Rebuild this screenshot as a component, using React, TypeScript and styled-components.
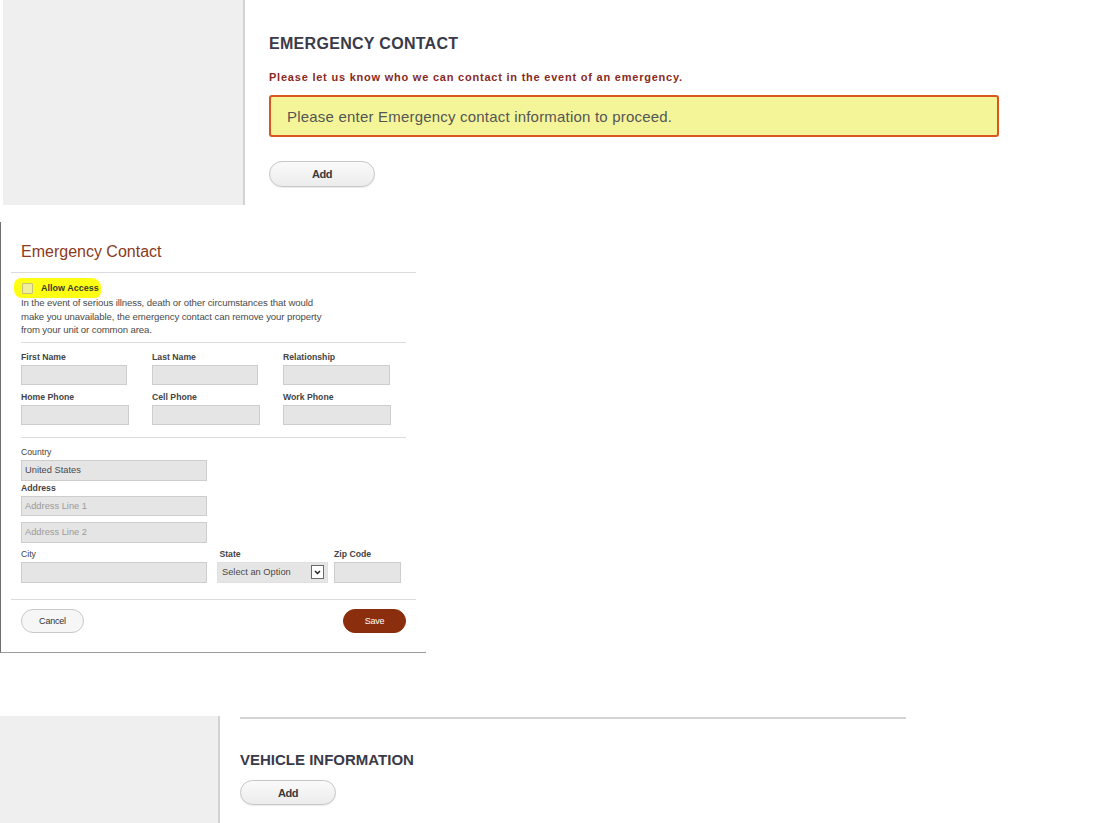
import React from 'react';
import styled, { createGlobalStyle } from 'styled-components';

const GlobalStyle = createGlobalStyle`
  body {
    margin: 0;
    background: #fff;
    font-family: "Liberation Sans", Arial, sans-serif;
    color: #333;
  }
  * { box-sizing: border-box; }
`;

const Page = styled.div`
  display: flex;
  flex-direction: column;
  width: 1104px;
  height: 823px;
  overflow: hidden;
`;

// Profile page strip (sidebar + content)
const Band = styled.section<{ $height: number; $gap?: number }>`
  display: flex;
  height: ${p => p.$height}px;
  margin-top: ${p => p.$gap || 0}px;
  flex-shrink: 0;
`;

const Sidebar = styled.aside<{ $width: number; $inset?: number }>`
  width: ${p => p.$width}px;
  margin-left: ${p => p.$inset || 0}px;
  background: #efefef;
  border-right: 2px solid #d2d2d2;
  flex-shrink: 0;
`;

const Content = styled.div<{ $pad: number }>`
  display: flex;
  flex-direction: column;
  align-items: flex-start;
  padding-left: ${p => p.$pad}px;
`;

const Rule = styled.div`
  width: 666px;
  height: 2px;
  background: #d4d4d4;
  margin-top: 1px;
`;

const SectionTitle = styled.h2<{ $size: number; $top: number; $spacing: number }>`
  margin: ${p => p.$top}px 0 0;
  font-size: ${p => p.$size}px;
  line-height: 16px;
  font-weight: bold;
  color: #3a3a48;
  letter-spacing: ${p => p.$spacing}px;
`;

const Intro = styled.p`
  margin: 19px 0 0;
  font-size: 11px;
  line-height: 13px;
  font-weight: bold;
  color: #8a2a1e;
  letter-spacing: 0.78px;
`;

const Alert = styled.div`
  margin-top: 11px;
  width: 730px;
  height: 42px;
  display: flex;
  align-items: center;
  padding-left: 16px;
  background: #f4f599;
  border: 2px solid #d9561f;
  border-radius: 3px;
  font-size: 15px;
  color: #555;
  letter-spacing: 0.2px;
`;

const PillButton = styled.button<{ $width: number; $height: number; $top: number }>`
  margin-top: ${p => p.$top}px;
  width: ${p => p.$width}px;
  height: ${p => p.$height}px;
  border: 1px solid #c6c6c6;
  border-radius: 14px;
  background: linear-gradient(#fafafa, #ececec);
  box-shadow: 0 1px 1px rgba(0, 0, 0, 0.08);
  font-family: inherit;
  font-size: 11px;
  font-weight: bold;
  color: #3a3a3a;
  letter-spacing: -0.4px;
  padding: 0;
`;

// Modal screenshot
const Dialog = styled.div`
  margin-top: 17px;
  width: 426px;
  height: 431px;
  flex-shrink: 0;
  border-left: 1px solid #6f6f6f;
  border-bottom: 1px solid #9a9a9a;
  padding: 20px 10px 0 10px;
  display: flex;
  flex-direction: column;
`;

const DialogTitle = styled.h1`
  margin: 0 0 0 10px;
  font-size: 16px;
  line-height: 20px;
  font-weight: normal;
  color: #8b3a1c;
`;

const Divider = styled.hr<{ $top: number }>`
  margin: ${p => p.$top}px 0 0;
  border: none;
  border-top: 1px solid #dcdcdc;
  height: 0;
`;

const Body = styled.div`
  padding: 0 10px;
  display: flex;
  flex-direction: column;
`;

const AllowRow = styled.label`
  margin-top: 5px;
  margin-left: -7px;
  align-self: flex-start;
  height: 20px;
  display: inline-flex;
  align-items: center;
  gap: 8px;
  padding: 0 2px 0 8px;
  background: #ffff14;
  border-radius: 7px 9px 6px 8px;
  font-size: 9px;
  font-weight: bold;
  color: #3a3a2a;
`;

const CheckBox = styled.span`
  width: 11px;
  height: 11px;
  border: 1px solid #c2c27a;
  background: #efef9a;
  border-radius: 1px;
`;

const Note = styled.p`
  margin: -2px 0 0;
  font-size: 9.6px;
  line-height: 13.5px;
  color: #4a4a4a;
  letter-spacing: -0.1px;
`;

const FieldGrid = styled.div`
  margin-top: 8px;
  display: grid;
  grid-template-columns: 108px 108px 108px;
  column-gap: 23px;
  row-gap: 6px;
`;

const Field = styled.div`
  display: flex;
  flex-direction: column;
`;

const Label = styled.span<{ $plain?: boolean; $top?: number }>`
  margin-top: ${p => p.$top || 0}px;
  font-size: 8.7px;
  line-height: 12px;
  font-weight: ${p => (p.$plain ? 'normal' : 'bold')};
  color: #444;
  white-space: nowrap;
`;

const Input = styled.div<{ $width: number; $height?: number; $top?: number; $muted?: boolean }>`
  margin-top: ${p => (p.$top === undefined ? 2 : p.$top)}px;
  width: ${p => p.$width}px;
  height: ${p => p.$height || 20}px;
  background: #e5e5e5;
  border: 1px solid #cdcdcd;
  display: flex;
  align-items: center;
  padding-left: 3px;
  font-size: 9.3px;
  color: ${p => (p.$muted ? '#9a9a9a' : '#4a4a4a')};
`;

const AddressBlock = styled.div`
  margin-top: 8px;
  display: flex;
  flex-direction: column;
`;

const CityRow = styled.div`
  margin-top: 5px;
  display: flex;
`;

const Cell = styled.div<{ $width: number; $left?: number }>`
  width: ${p => p.$width}px;
  margin-left: ${p => p.$left || 0}px;
  display: flex;
  flex-direction: column;
`;

const Select = styled.div`
  margin-top: 2px;
  height: 21px;
  background: #e5e5e5;
  border: 1px solid #e0e0e0;
  display: flex;
  align-items: center;
  justify-content: space-between;
  padding: 0 3px 0 4px;
  font-size: 9.3px;
  color: #4a4a4a;
`;

const SelectArrow = styled.span`
  width: 13px;
  height: 14px;
  background: #fff;
  border: 1px solid #6a6a6a;
  display: flex;
  align-items: center;
  justify-content: center;
`;

const Footer = styled.div`
  margin-top: 9px;
  padding: 0 10px;
  display: flex;
  justify-content: space-between;
`;

const FooterButton = styled.button<{ $primary?: boolean }>`
  width: 63px;
  height: 24px;
  border-radius: 12px;
  padding: 0;
  font-family: inherit;
  font-size: 9px;
  letter-spacing: -0.2px;
  border: 1px solid ${p => (p.$primary ? '#8b2c0c' : '#c9c9c9')};
  background: ${p => (p.$primary ? '#8b2e0d' : '#f6f6f6')};
  color: ${p => (p.$primary ? '#fff' : '#333')};
`;

const Chevron = () => (
  <svg width="7" height="5" viewBox="0 0 7 5">
    <path d="M1 1 L3.5 3.5 L6 1" stroke="#222" strokeWidth="1.5" fill="none" />
  </svg>
);

const App: React.FC = () => {
  return (
    <Page>
      <GlobalStyle />
      <Band $height={205}>
        <Sidebar $width={242} $inset={3} />
        <Content $pad={24}>
          <SectionTitle $size={16} $top={36} $spacing={0.3}>EMERGENCY CONTACT</SectionTitle>
          <Intro>Please let us know who we can contact in the event of an emergency.</Intro>
          <Alert>Please enter Emergency contact information to proceed.</Alert>
          <PillButton $width={106} $height={26} $top={24}>Add</PillButton>
        </Content>
      </Band>

      <Dialog>
        <DialogTitle>Emergency Contact</DialogTitle>
        <Divider $top={10} />
        <Body>
          <AllowRow>
            <CheckBox />
            Allow Access
          </AllowRow>
          <Note>
            In the event of serious illness, death or other circumstances that would
            <br />
            make you unavailable, the emergency contact can remove your property
            <br />
            from your unit or common area.
          </Note>
          <Divider $top={5} />
          <FieldGrid>
            <Field>
              <Label>First Name</Label>
              <Input $width={106} />
            </Field>
            <Field>
              <Label>Last Name</Label>
              <Input $width={106} />
            </Field>
            <Field>
              <Label>Relationship</Label>
              <Input $width={107} />
            </Field>
            <Field>
              <Label>Home Phone</Label>
              <Input $width={108} />
            </Field>
            <Field>
              <Label>Cell Phone</Label>
              <Input $width={108} />
            </Field>
            <Field>
              <Label>Work Phone</Label>
              <Input $width={108} />
            </Field>
          </FieldGrid>
          <Divider $top={12} />
          <AddressBlock>
            <Label $plain>Country</Label>
            <Input $width={186} $height={21}>United States</Input>
            <Label $top={1}>Address</Label>
            <Input $width={186} $muted>Address Line 1</Input>
            <Input $width={186} $height={21} $top={6} $muted>Address Line 2</Input>
          </AddressBlock>
          <CityRow>
            <Cell $width={186}>
              <Label $plain>City</Label>
              <Input $width={186} $height={21} />
            </Cell>
            <Cell $width={111} $left={10}>
              <Label>&nbsp;State</Label>
              <Select>
                Select an Option
                <SelectArrow>
                  <Chevron />
                </SelectArrow>
              </Select>
            </Cell>
            <Cell $width={67} $left={6}>
              <Label>Zip Code</Label>
              <Input $width={67} $height={21} />
            </Cell>
          </CityRow>
        </Body>
        <Divider $top={16} />
        <Footer>
          <FooterButton>Cancel</FooterButton>
          <FooterButton $primary>Save</FooterButton>
        </Footer>
      </Dialog>

      <Band $height={108} $gap={63}>
        <Sidebar $width={220} />
        <Content $pad={20}>
          <Rule />
          <SectionTitle $size={15} $top={33} $spacing={0}>VEHICLE INFORMATION</SectionTitle>
          <PillButton $width={96} $height={25} $top={12}>Add</PillButton>
        </Content>
      </Band>
    </Page>
  );
};

export default App;
